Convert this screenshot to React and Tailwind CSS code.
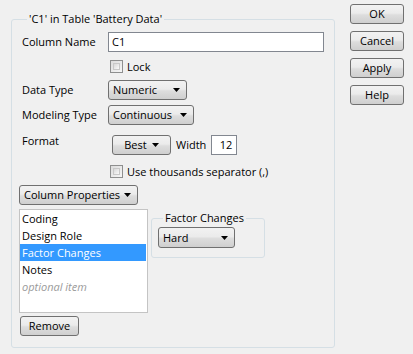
import React from "react";

function Tri() {
  return (
    <svg width="7" height="4" viewBox="0 0 7 4" className="shrink-0">
      <polygon points="0,0 7,0 3.5,4" fill="#000" />
    </svg>
  );
}

function Btn({ children, className = "" }) {
  return (
    <div
      className={
        "flex items-center justify-center h-[20px] rounded-[3px] border border-[#707070] bg-[linear-gradient(#f2f2f2,#ebebeb_45%,#dddddd_55%,#cfcfcf)] " +
        className
      }
    >
      {children}
    </div>
  );
}

function Drop({ label, className = "", center = false }) {
  return (
    <div
      className={
        "flex items-center h-[20px] rounded-[3px] border border-[#707070] bg-[linear-gradient(#f2f2f2,#ebebeb_45%,#dddddd_55%,#cfcfcf)] " +
        (center ? "justify-center gap-[5px] " : "justify-between pl-[4px] pr-[6px] ") +
        className
      }
    >
      <span>{label}</span>
      <Tri />
    </div>
  );
}

function Check({ label }) {
  return (
    <div className="flex items-center h-[13px] ml-[88px]">
      <div className="w-[13px] h-[13px] border border-[#8e8f8f] bg-[linear-gradient(135deg,#dcdcdc,#f6f6f6)] p-[2px]">
        <div className="w-full h-full border border-[#c8c8c8] bg-[linear-gradient(135deg,#d8d8d8,#f9f9f9)]" />
      </div>
      <span className="ml-[4px]">{label}</span>
    </div>
  );
}

export default function App() {
  return (
    <div className="w-[413px] h-[354px] bg-[#f0f0f0] flex font-['Open_Sans',sans-serif] text-[11px] leading-[16px] text-black">
      <fieldset className="ml-[11px] mt-[11px] w-[324px] h-[337px] border border-[#d5dfe5] rounded-[3px] pl-[10px] pr-[9px]">
        <legend className="ml-[5px] px-[2px] leading-[16px]">'C1' in Table 'Battery Data'</legend>
        <div className="flex items-center h-[20px] mt-[5px]">
          <span className="w-[86px]">Column Name</span>
          <div className="w-[216px] h-[20px] border border-[#828790] bg-white pl-[3px] flex items-center">C1</div>
        </div>
        <div className="mt-[8px]">
          <Check label="Lock" />
        </div>
        <div className="flex items-center h-[20px] mt-[7px]">
          <span className="w-[86px]">Data Type</span>
          <Drop label="Numeric" className="w-[79px]" />
        </div>
        <div className="flex items-center h-[20px] mt-[5px]">
          <span className="w-[86px]">Modeling Type</span>
          <Drop label="Continuous" className="w-[86px]" />
        </div>
        <div className="flex items-start h-[20px] mt-[10px]">
          <span className="w-[90px] -mt-[2px]">Format</span>
          <Drop label="Best" center className="w-[59px]" />
          <span className="ml-[5px] leading-[20px]">Width</span>
          <div className="ml-[5px] w-[26px] h-[20px] border border-[#828790] bg-white flex items-center justify-end pr-[4px]">12</div>
        </div>
        <div className="mt-[10px]">
          <Check label="Use thousands separator (,)" />
        </div>
        <div className="mt-[7px] -ml-[3px]">
          <Drop label="Column Properties" className="w-[119px]" />
        </div>
        <div className="mt-[4px] -ml-[3px] flex items-start">
          <div className="w-[129px] h-[104px] border border-[#c4c4c4] bg-white pt-0 px-0">
            <div className="h-[17px] leading-[17px] pl-[2px]">Coding</div>
            <div className="h-[17px] leading-[17px] pl-[2px]">Design Role</div>
            <div className="h-[17px] leading-[17px] pl-[2px] bg-[#3399ff] text-white mr-[1px]">Factor Changes</div>
            <div className="h-[17px] leading-[17px] pl-[2px]">Notes</div>
            <div className="h-[17px] leading-[17px] pl-[2px] italic text-[#9a9a9a]">optional item</div>
          </div>
          <fieldset className="ml-[3px] mt-[1px] w-[114px] h-[48px] border border-[#d5dfe5] rounded-[3px] pl-[6px]">
            <legend className="ml-[5px] px-[2px] leading-[16px]">Factor Changes</legend>
            <Drop label="Hard" className="w-[77px] h-[21px] mt-[1px]" />
          </fieldset>
        </div>
        <div className="mt-[3px] -ml-[2px]">
          <Btn className="w-[59px]">Remove</Btn>
        </div>
      </fieldset>
      <div className="ml-[15px] mt-[4px] flex flex-col gap-[7px]">
        <Btn className="w-[54px]">OK</Btn>
        <Btn className="w-[54px]">Cancel</Btn>
        <Btn className="w-[54px]">Apply</Btn>
        <Btn className="w-[54px]">Help</Btn>
      </div>
    </div>
  );
}
